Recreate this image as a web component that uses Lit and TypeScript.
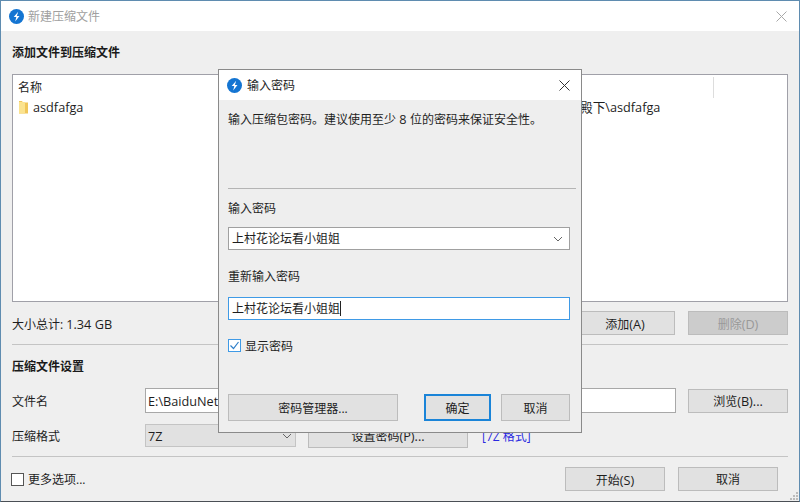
import { LitElement, html, css, svg } from "lit";
import { customElement } from "lit/decorators.js";

const logo = () => html`<svg class="logo" width="15" height="15" viewBox="0 0 16 16">
  <circle cx="8" cy="8" r="8" fill="#1475d2"></circle>
  ${svg`<path d="M9.8 3 5 8.6h2.8L6.6 13.2 11.2 7.4H8.4Z" fill="#fff"></path>`}
</svg>`;

const closeX = (cls: string) => html`<svg class=${cls} width="11" height="11" viewBox="0 0 11 11">
  <path d="M.5.5l10 10M10.5.5l-10 10" fill="none" stroke="currentColor" stroke-width="1"></path>
</svg>`;

const chevron = html`<svg class="chev" width="10" height="6" viewBox="0 0 10 6">
  <path d="M1 1l4 4 4-4" fill="none" stroke="#666" stroke-width="1"></path>
</svg>`;

@customElement("app-root")
export class AppRoot extends LitElement {
  static styles = css`
    :host {
      display: block;
      position: relative;
      width: 800px;
      height: 502px;
      box-sizing: border-box;
      overflow: hidden;
      background: #efefef;
      border: 1px solid #5f8cb0;
      border-bottom-color: #4a4f55;
      font-family: "Open Sans", "Noto Sans CJK SC", sans-serif;
      font-size: 12px;
      line-height: 16px;
      color: #1e1e1e;
    }
    * { box-sizing: border-box; }
    .titlebar {
      height: 30px;
      background: #fff;
      display: flex;
      align-items: center;
      padding: 0 12px 0 8px;
      gap: 4px;
    }
    .titlebar .ttl { flex: 1; padding-top: 2px; }
    .main .ttl { color: #a0a0a0; }
    .logo { flex: none; }
    .x-off { color: #a8a8a8; }
    .x-on { color: #333; }
    .content { padding: 13px 11px 0; }
    .bold { font-weight: 700; color: #1a1a1a; padding-top: 1px; height: 16px; line-height: 16px; }
    .list {
      position: relative;
      margin-top: 14px;
      height: 228px;
      background: #fff;
      border: 1px solid #a0a0a8;
      padding: 5px 5px 0;
    }
    .coldiv {
      position: absolute;
      left: 700px;
      top: 2px;
      width: 1px;
      height: 21px;
      background: #ddd;
    }
    .li {
      margin-top: 3px;
      padding-left: 1px;
      display: flex;
      align-items: center;
      gap: 5px;
      font-size: 12.7px;
    }
    .folder { flex: none; }
    .pathcell { width: 572px; text-align: right; white-space: nowrap; }
    .sumrow {
      margin-top: 9px;
      display: flex;
      align-items: center;
      gap: 13px;
    }
    .sum { flex: 1; padding-top: 2px; }
    .latin { font-size: 12.7px; }
    .sep { height: 1px; background: #c4c4c4; }
    .btn {
      flex: none;
      height: 24px;
      width: 100px;
      display: flex;
      align-items: center;
      justify-content: center;
      background: #e1e1e1;
      border: 1px solid #bcbcbc;
      padding-top: 2px;
      font-size: 12px;
      white-space: nowrap;
    }
    .btn.off { background: #cccccc; color: #999; }
    .sumrow + .sep { margin-top: 9px; }
    .h2 { margin-top: 13px; }
    .grid {
      margin-top: 14px;
      display: grid;
      grid-template-columns: 133px 531px 112px;
      grid-template-rows: 25px 23px;
      row-gap: 11px;
      align-items: center;
    }
    .rowlab { padding-top: 2px; }
    .grid > .browse { margin-left: 12px; }
    .input {
      height: 25px;
      background: #fff;
      border: 1px solid #a8a8a8;
      display: flex;
      align-items: center;
      padding-left: 2px;
      font-size: 12.7px;
      white-space: nowrap;
      overflow: hidden;
    }
    .fmt {
      grid-column: 2 / 4;
      display: flex;
      align-items: center;
    }
    .select-off {
      width: 151px;
      height: 23px;
      background: #e1e1e1;
      border: 1px solid #c4c4c4;
      display: flex;
      align-items: center;
      justify-content: space-between;
      padding: 0 3px 0 2px;
      font-size: 12.7px;
      margin-right: 12px;
    }
    .fmt .btn { width: 160px; height: 24px; }
    .link { margin-left: 14px; color: #2a2ae0; padding-top: 2px; }
    .fmt-sep { margin-top: 9px; }
    .foot {
      margin-top: 10px;
      display: flex;
      align-items: center;
      padding-right: 10px;
    }
    .cb {
      flex: none;
      width: 13px;
      height: 13px;
      background: #fff;
      border: 1px solid #555;
      margin-right: 4px;
      display: flex;
    }
    .foot .cb { margin-left: -1px; }
    .foot .more { flex: 1; padding-top: 2px; }
    .foot .btn + .btn { margin-left: 13px; }
    .grip {
      position: absolute;
      right: 1px;
      bottom: 1px;
      width: 9px;
      height: 9px;
    }

    .dialog {
      position: absolute;
      left: 217px;
      top: 68px;
      width: 364px;
      height: 364px;
      background: #eeeeee;
      border: 1px solid #8a8a8a;
    }
    .dialog .titlebar { padding: 0 11px 0 8px; gap: 5px; }
    .dbody { padding: 10px 5px 0 9px; }
    .desc { padding-top: 1px; height: 16px; }
    .dsep { margin-top: 62px; height: 1px; background: #b4b4b4; }
    .lab { margin-top: 11px; padding-top: 1px; height: 16px; }
    .lab.second { margin-top: 18px; }
    .field {
      margin-top: 11px;
      width: 342px;
      height: 23px;
      background: #fff;
      border: 1px solid #a0a0a0;
      display: flex;
      align-items: center;
      justify-content: space-between;
      padding: 0 6px 0 3px;
    }
    .field.focus { margin-top: 13px; border-color: #3f9ae6; justify-content: flex-start; }
    .field > span:first-child { padding-top: 1px; }
    .caret { width: 1px; height: 15px; background: #222; }
    .check { margin-top: 19px; display: flex; align-items: center; height: 13px; }
    .check .cb { border-color: #3f9ae6; }
    .check .txt { padding-top: 2px; }
    .dbtns {
      margin-top: 42px;
      width: 342px;
      display: flex;
      height: 27px;
    }
    .dbtns .btn { height: 27px; }
    .dbtns .mgr { width: 170px; }
    .dbtns .ok {
      width: 67px;
      margin-left: 26px;
      border: 2px solid #1a84d8;
    }
    .dbtns .cancel { width: 69px; margin-left: 10px; }
  `;

  render() {
    return html`
      <div class="main">
        <div class="titlebar">
          ${logo()}
          <span class="ttl">新建压缩文件</span>
          ${closeX("x-off")}
        </div>
        <div class="content">
          <div class="bold">添加文件到压缩文件</div>
          <div class="list">
            <div class="coldiv"></div>
            <div>名称</div>
            <div class="li">
              <svg class="folder" width="9" height="13" viewBox="0 0 9 13">
                <path d="M0 0h3l1 1.5h5V12.5H0Z" fill="#f0c65a"></path>
                <path d="M0 1h6v11.5H0Z" fill="#fbe38f"></path>
              </svg>
              <span>asdfafga</span>
              <span class="pathcell">E:\\BaiduNetdiskDownload\\殿下\\asdfafga</span>
            </div>
          </div>
          <div class="sumrow">
            <span class="sum">大小总计: <span class="latin">1.34 GB</span></span>
            <div class="btn"><span>添加<span class="latin">(A)</span></span></div>
            <div class="btn off"><span>删除<span class="latin">(D)</span></span></div>
          </div>
          <div class="sep"></div>
          <div class="bold h2">压缩文件设置</div>
          <div class="grid">
            <span class="rowlab">文件名</span>
            <div class="input">E:\\BaiduNetdiskDownload\\asdfafga.7z</div>
            <div class="btn browse"><span>浏览<span class="latin">(B)...</span></span></div>
            <span class="rowlab">压缩格式</span>
            <div class="fmt">
              <div class="select-off"><span>7Z</span>${chevron}</div>
              <div class="btn"><span>设置密码<span class="latin">(P)...</span></span></div>
              <span class="link">[7Z 格式]</span>
            </div>
          </div>
          <div class="sep fmt-sep"></div>
          <div class="foot">
            <span class="cb"></span>
            <span class="more">更多选项...</span>
            <div class="btn"><span>开始<span class="latin">(S)</span></span></div>
            <div class="btn">取消</div>
          </div>
        </div>
      </div>
      <svg class="grip" viewBox="0 0 9 9">
        <path d="M7 1h2v2H7ZM4 4h2v2H4ZM7 4h2v2H7ZM1 7h2v2H1ZM4 7h2v2H4ZM7 7h2v2H7Z" fill="#bbb"></path>
      </svg>

      <div class="dialog">
        <div class="titlebar">
          ${logo()}
          <span class="ttl">输入密码</span>
          ${closeX("x-on")}
        </div>
        <div class="dbody">
          <div class="desc">输入压缩包密码。建议使用至少<span class="latin"> 8 </span>位的密码来保证安全性。</div>
          <div class="dsep"></div>
          <div class="lab">输入密码</div>
          <div class="field"><span>上村花论坛看小姐姐</span>${chevron}</div>
          <div class="lab second">重新输入密码</div>
          <div class="field focus"><span>上村花论坛看小姐姐</span><span class="caret"></span></div>
          <div class="check">
            <span class="cb">
              <svg width="11" height="11" viewBox="0 0 11 11">
                <path d="M1.5 5.5l3 3 5-6.5" fill="none" stroke="#2f7fc9" stroke-width="1.2"></path>
              </svg>
            </span>
            <span class="txt">显示密码</span>
          </div>
          <div class="dbtns">
            <div class="btn mgr">密码管理器...</div>
            <div class="btn ok">确定</div>
            <div class="btn cancel">取消</div>
          </div>
        </div>
      </div>
    `;
  }
}
